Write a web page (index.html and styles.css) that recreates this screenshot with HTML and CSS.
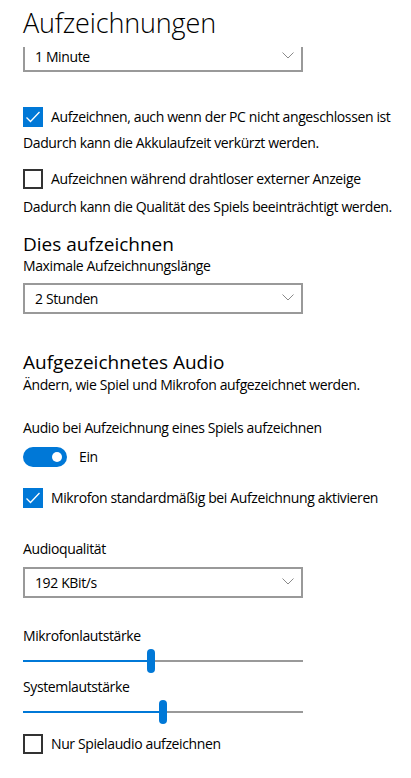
FILE: index.html
```html
<!DOCTYPE html>
<html lang="de">
<head>
<meta charset="utf-8">
<title>Aufzeichnungen</title>
<link rel="stylesheet" href="styles.css">
</head>
<body>
<div class="page">
  <h1 class="title">Aufzeichnungen</h1>

  <div class="clip">
    <div class="select select-clipped">
      <span>1 Minute</span>
      <svg class="chev" width="12" height="7" viewBox="0 0 12 7"><path d="M0.5 0.5 L6 6 L11.5 0.5" fill="none" stroke="#8a8a8a" stroke-width="1"/></svg>
    </div>
  </div>

  <label class="check mt-cb1">
    <span class="box checked"><svg width="20" height="20" viewBox="0 0 20 20"><path d="M3.5 10.5 L7.5 14.5 L16.5 5" fill="none" stroke="#fff" stroke-width="1.3"/></svg></span>
    <span class="txt">Aufzeichnen, auch wenn der PC nicht angeschlossen ist</span>
  </label>
  <p class="text mt-d1">Dadurch kann die Akkulaufzeit verkürzt werden.</p>

  <label class="check mt-cb2">
    <span class="box"></span>
    <span class="txt">Aufzeichnen während drahtloser externer Anzeige</span>
  </label>
  <p class="text mt-d2">Dadurch kann die Qualität des Spiels beeinträchtigt werden.</p>

  <h2 class="heading mt-h1">Dies aufzeichnen</h2>
  <p class="text">Maximale Aufzeichnungslänge</p>
  <div class="select mt-s2">
    <span>2 Stunden</span>
    <svg class="chev" width="12" height="7" viewBox="0 0 12 7"><path d="M0.5 0.5 L6 6 L11.5 0.5" fill="none" stroke="#8a8a8a" stroke-width="1"/></svg>
  </div>

  <h2 class="heading mt-h2">Aufgezeichnetes Audio</h2>
  <p class="text mt-1">Ändern, wie Spiel und Mikrofon aufgezeichnet werden.</p>

  <p class="text mt-audio">Audio bei Aufzeichnung eines Spiels aufzeichnen</p>
  <div class="toggle-row mt-toggle">
    <span class="toggle"><span class="knob"></span></span>
    <span class="txt">Ein</span>
  </div>

  <label class="check mt-cb3">
    <span class="box checked"><svg width="20" height="20" viewBox="0 0 20 20"><path d="M3.5 10.5 L7.5 14.5 L16.5 5" fill="none" stroke="#fff" stroke-width="1.3"/></svg></span>
    <span class="txt">Mikrofon standardmäßig bei Aufzeichnung aktivieren</span>
  </label>

  <p class="text mt-aq">Audioqualität</p>
  <div class="select mt-s3">
    <span>192 KBit/s</span>
    <svg class="chev" width="12" height="7" viewBox="0 0 12 7"><path d="M0.5 0.5 L6 6 L11.5 0.5" fill="none" stroke="#8a8a8a" stroke-width="1"/></svg>
  </div>

  <p class="text mt-mic">Mikrofonlautstärke</p>
  <div class="slider mt-sl1">
    <span class="fill" style="width:124px"></span>
    <span class="thumb"></span>
    <span class="rest"></span>
  </div>

  <p class="text mt-sys">Systemlautstärke</p>
  <div class="slider mt-sl2">
    <span class="fill" style="width:136px"></span>
    <span class="thumb"></span>
    <span class="rest"></span>
  </div>

  <label class="check mt-cb4">
    <span class="box"></span>
    <span class="txt">Nur Spielaudio aufzeichnen</span>
  </label>
</div>
</body>
</html>
```
FILE: styles.css
```css
* { box-sizing: border-box; }

html, body {
  margin: 0;
  padding: 0;
  background: #fff;
}

body {
  font-family: "Open Sans", "Noto Sans", sans-serif;
  color: #000;
  font-size: 14px;
  letter-spacing: -0.38px;
  overflow: hidden;
}

.page {
  display: flex;
  flex-direction: column;
  align-items: flex-start;
  padding-left: 23px;
  width: 411px;
  height: 778px;
}

.title {
  margin: 0;
  height: 47px;
  font-size: 27px;
  line-height: 46px;
  font-weight: 300;
  letter-spacing: -0.15px;
}

.heading {
  margin: 0;
  font-size: 19px;
  font-weight: 400;
  line-height: 24px;
  height: 24px;
  letter-spacing: 0;
}

.text {
  margin: 0;
  line-height: 20px;
  height: 20px;
  white-space: nowrap;
}

/* dropdowns */
.clip {
  height: 25px;
  width: 280px;
  overflow: hidden;
}

.select {
  width: 280px;
  height: 31px;
  border: 2px solid #999;
  display: flex;
  align-items: center;
  justify-content: space-between;
  padding: 0 7px 0 10px;
  line-height: 20px;
}

.select span { padding-top: 1px; }

.select-clipped { margin-top: -6px; }

.chev { display: block; margin-top: -2px; }

/* checkbox */
.check {
  display: flex;
  align-items: center;
  gap: 8px;
  height: 20px;
  line-height: 20px;
  white-space: nowrap;
}

.box {
  width: 20px;
  height: 20px;
  flex: none;
  border: 2px solid #333;
  display: block;
}

.box.checked {
  border: none;
  background: #0078d7;
}

.box svg { display: block; }

/* toggle */
.toggle-row {
  display: flex;
  align-items: center;
  gap: 12px;
  height: 20px;
  line-height: 20px;
}

.toggle {
  width: 44px;
  height: 20px;
  border-radius: 10px;
  background: #0078d7;
  display: flex;
  align-items: center;
  justify-content: flex-end;
  padding-right: 5px;
}

.knob {
  width: 10px;
  height: 10px;
  border-radius: 50%;
  background: #fff;
}

/* slider */
.slider {
  width: 280px;
  height: 26px;
  display: flex;
  align-items: center;
}

.fill {
  height: 2px;
  background: #0078d7;
}

.rest {
  flex: 1;
  height: 2px;
  background: #999;
}

.thumb {
  width: 8px;
  height: 24px;
  border-radius: 4px;
  background: #0078d7;
  flex: none;
}

/* vertical rhythm */
.mt-cb1 { margin-top: 35px; }
.mt-d1 { margin-top: 6px; }
.mt-cb2 { margin-top: 16px; }
.mt-d2 { margin-top: 8px; }
.mt-h1 { margin-top: 15px; }
.mt-s2 { margin-top: 7px; }
.mt-h2 { margin-top: 36px; }
.mt-1 { margin-top: 1px; }
.mt-audio { margin-top: 23px; }
.mt-toggle { margin-top: 9px; }
.mt-cb3 { margin-top: 21px; }
.mt-aq { margin-top: 31px; }
.mt-s3 { margin-top: 8px; }
.mt-mic { margin-top: 28px; }
.mt-sl1 { margin-top: 2px; }
.mt-sys { margin-top: 3px; }
.mt-sl2 { margin-top: 2px; }
.mt-cb4 { margin-top: 9px; }
```
